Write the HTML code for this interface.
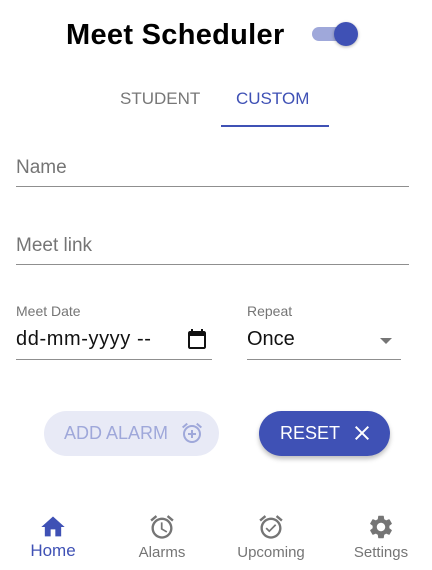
<!DOCTYPE html>
<html><head><style>
*{margin:0;padding:0;box-sizing:border-box}
body{width:432px;height:570px;background:#fff;font-family:"Liberation Sans",sans-serif;position:relative;overflow:hidden}
.a{position:absolute;white-space:nowrap}
.line{position:absolute;height:1px;background:#8f8f8f}
.lbl{color:#757575}
.nav{position:absolute;top:513px;width:90px;text-align:center;font-size:15px;color:#757575}
.nav svg{display:block;margin:0 auto 3px}
</style></head><body>
<div class="a" style="left:66px;top:19px;font-size:29px;font-weight:bold;letter-spacing:0.3px">Meet Scheduler</div>
<div class="a" style="left:312px;top:27px;width:38px;height:14px;border-radius:7px;background:#9fa8da"></div>
<div class="a" style="left:334px;top:22px;width:24px;height:24px;border-radius:50%;background:#3f51b5;box-shadow:0 1px 3px rgba(0,0,0,.3)"></div>

<div class="a" style="left:120px;top:89px;font-size:17px;color:#777">STUDENT</div>
<div class="a" style="left:236px;top:89px;font-size:17px;color:#3f51b5">CUSTOM</div>
<div class="a" style="left:221px;top:125px;width:108px;height:2px;background:#3f51b5"></div>

<div class="a lbl" style="left:16px;top:157px;font-size:19px">Name</div>
<div class="line" style="left:16px;top:186px;width:393px"></div>
<div class="a lbl" style="left:16px;top:235px;font-size:19px">Meet link</div>
<div class="line" style="left:16px;top:264px;width:393px"></div>

<div class="a lbl" style="left:16px;top:303px;font-size:14px">Meet Date</div>
<div class="a" style="left:16px;top:328px;font-size:20px;color:#111;letter-spacing:0.6px">dd-mm-yyyy --</div>
<div class="a" style="left:156px;top:326px;width:28px;height:28px;background:#fff"></div>
<svg class="a" style="left:185px;top:327px" width="24" height="24" viewBox="0 0 24 24"><path fill="#111" d="M19 4h-1V2h-2v2H8V2H6v2H5c-1.1 0-2 .9-2 2v14c0 1.1.9 2 2 2h14c1.1 0 2-.9 2-2V6c0-1.1-.9-2-2-2zm0 16H5V9h14v11z"/></svg>
<div class="line" style="left:16px;top:359px;width:196px"></div>

<div class="a lbl" style="left:247px;top:303px;font-size:14px">Repeat</div>
<div class="a" style="left:247px;top:328px;font-size:20px;color:#111">Once</div>
<div class="a" style="left:380px;top:338px;width:0;height:0;border-left:6px solid transparent;border-right:6px solid transparent;border-top:6px solid #757575"></div>
<div class="line" style="left:247px;top:359px;width:154px"></div>

<div class="a" style="left:44px;top:411px;width:175px;height:45px;border-radius:23px;background:#e8eaf6"></div>
<div class="a" style="left:64px;top:423px;font-size:18px;color:#9fa8da">ADD ALARM</div>
<svg class="a" style="left:180px;top:421px" width="24" height="24" viewBox="0 0 24 24"><path fill="#9fa8da" d="M7.88 3.39L6.6 1.86 2 5.71l1.29 1.53 4.59-3.85zM22 5.72l-4.6-3.86-1.29 1.53 4.6 3.86L22 5.72zM12 4c-4.97 0-9 4.03-9 9s4.02 9 9 9c4.97 0 9-4.03 9-9s-4.03-9-9-9zm0 16c-3.87 0-7-3.13-7-7s3.13-7 7-7 7 3.13 7 7-3.13 7-7 7zm1-11h-2v3H8v2h3v3h2v-3h3v-2h-3V9z"/></svg>

<div class="a" style="left:259px;top:411px;width:131px;height:45px;border-radius:23px;background:#3f51b5;box-shadow:0 3px 5px rgba(0,0,0,.25)"></div>
<div class="a" style="left:280px;top:423px;font-size:18px;color:#fff">RESET</div>
<svg class="a" style="left:350px;top:421px" width="24" height="24" viewBox="0 0 24 24"><path fill="#fff" d="M19 6.41L17.59 5 12 10.59 6.41 5 5 6.41 10.59 12 5 17.59 6.41 19 12 13.41 17.59 19 19 17.59 13.41 12z"/></svg>

<div class="nav" style="left:8px;color:#3f51b5;font-size:17px"><svg width="28" height="28" viewBox="0 0 24 24"><path fill="#3f51b5" d="M10 20v-6h4v6h5v-8h3L12 3 2 12h3v8z"/></svg><span style="position:relative;top:-3px">Home</span></div>
<div class="nav" style="left:117px"><svg width="28" height="28" viewBox="0 0 24 24"><path fill="#757575" d="M22 5.72l-4.6-3.86-1.29 1.53 4.6 3.86L22 5.72zM7.88 3.39L6.6 1.86 2 5.71l1.29 1.53 4.59-3.85zM12.5 8H11v6l4.75 2.85.75-1.23-4-2.37V8zM12 4c-4.97 0-9 4.03-9 9s4.02 9 9 9c4.97 0 9-4.03 9-9s-4.03-9-9-9zm0 16c-3.87 0-7-3.13-7-7s3.13-7 7-7 7 3.13 7 7-3.13 7-7 7z"/></svg>Alarms</div>
<div class="nav" style="left:226px"><svg width="28" height="28" viewBox="0 0 24 24"><path fill="#757575" d="M22 5.72l-4.6-3.86-1.29 1.53 4.6 3.86L22 5.72zM7.88 3.39L6.6 1.86 2 5.71l1.29 1.53 4.59-3.85zM12 4c-4.97 0-9 4.03-9 9s4.02 9 9 9c4.97 0 9-4.03 9-9s-4.03-9-9-9zm0 16c-3.87 0-7-3.13-7-7s3.13-7 7-7 7 3.13 7 7-3.13 7-7 7zm-1.46-5.47L8.41 12.4l-1.06 1.06 3.18 3.18 6-6-1.06-1.06-4.93 4.95z"/></svg>Upcoming</div>
<div class="nav" style="left:336px"><svg width="28" height="28" viewBox="0 0 24 24"><path fill="#757575" d="M19.14 12.94c.04-.3.06-.61.06-.94 0-.32-.02-.64-.07-.94l2.03-1.58c.18-.14.23-.41.12-.61l-1.92-3.32c-.12-.22-.37-.29-.59-.22l-2.39.96c-.5-.38-1.03-.7-1.62-.94l-.36-2.54c-.04-.24-.24-.41-.48-.41h-3.84c-.24 0-.43.17-.47.41l-.36 2.54c-.59.24-1.13.57-1.62.94l-2.39-.96c-.22-.08-.47 0-.59.22L2.74 8.87c-.12.21-.08.47.12.61l2.03 1.58c-.05.3-.09.63-.09.94s.02.64.07.94l-2.03 1.58c-.18.14-.23.41-.12.61l1.92 3.32c.12.22.37.29.59.22l2.39-.96c.5.38 1.03.7 1.62.94l.36 2.54c.05.24.24.41.48.41h3.84c.24 0 .44-.17.47-.41l.36-2.54c.59-.24 1.13-.56 1.62-.94l2.39.96c.22.08.47 0 .59-.22l1.92-3.32c.12-.22.07-.47-.12-.61l-2.01-1.58zM12 15.6c-1.98 0-3.6-1.62-3.6-3.6s1.62-3.6 3.6-3.6 3.6 1.62 3.6 3.6-1.62 3.6-3.6 3.6z"/></svg>Settings</div>
</body></html>
